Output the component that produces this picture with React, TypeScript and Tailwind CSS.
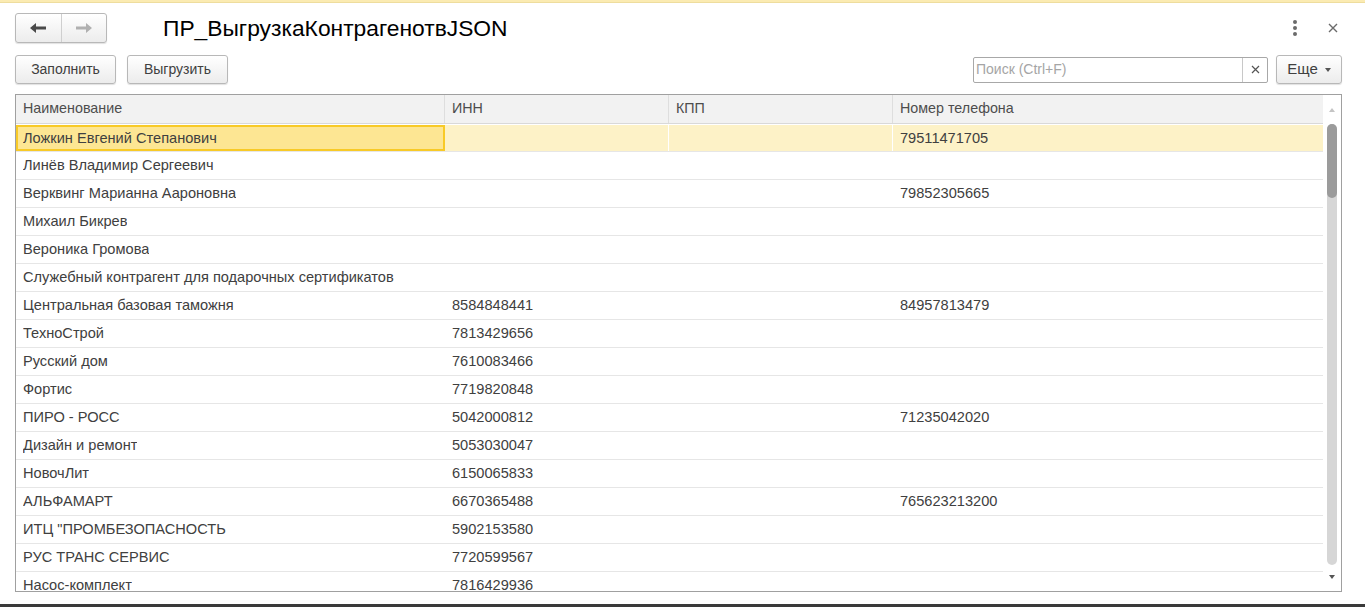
import React from "react";

const rows: [string, string, string, string][] = [
  ["Ложкин Евгений Степанович", "", "", "79511471705"],
  ["Линёв Владимир Сергеевич", "", "", ""],
  ["Верквинг Марианна Аароновна", "", "", "79852305665"],
  ["Михаил Бикрев", "", "", ""],
  ["Вероника Громова", "", "", ""],
  ["Служебный контрагент для подарочных сертификатов", "", "", ""],
  ["Центральная базовая таможня", "8584848441", "", "84957813479"],
  ["ТехноСтрой", "7813429656", "", ""],
  ["Русский дом", "7610083466", "", ""],
  ["Фортис", "7719820848", "", ""],
  ["ПИРО - РОСС", "5042000812", "", "71235042020"],
  ["Дизайн и ремонт", "5053030047", "", ""],
  ["НовочЛит", "6150065833", "", ""],
  ["АЛЬФАМАРТ", "6670365488", "", "765623213200"],
  ["ИТЦ \"ПРОМБЕЗОПАСНОСТЬ", "5902153580", "", ""],
  ["РУС ТРАНС СЕРВИС", "7720599567", "", ""],
  ["Насос-комплект", "7816429936", "", ""],
];

const btn =
  "h-[29px] rounded-[3px] border border-[#b8b8b8] bg-gradient-to-b from-white to-[#ececec] shadow-[0_1px_1px_rgba(0,0,0,0.12)] text-[14px] text-[#404040]";

function Arrow({ dir, color }: { dir: "left" | "right"; color: string }) {
  return (
    <svg width="18" height="12" viewBox="0 0 18 12">
      <g transform={dir === "right" ? "translate(18,0) scale(-1,1)" : undefined}>
        <path d="M1 6 L7 1 L7 4.5 L17 4.5 L17 7.5 L7 7.5 L7 11 Z" fill={color} />
      </g>
    </svg>
  );
}

export default function App() {
  return (
    <div
      className="h-[607px] w-[1365px] bg-white flex flex-col overflow-hidden"
      style={{ fontFamily: '"Liberation Sans", Arial, sans-serif' }}
    >
      <div className="h-[3px] bg-[#fbebb2] border-b border-[#eedd9e]" />

      <div className="flex-1 flex flex-col px-[15px] pr-[23px] pt-[10px] min-h-0">
        {/* title row */}
        <div className="flex items-center h-[30px]">
          <div className="flex h-[30px] w-[92px] rounded-[3px] border border-[#b8b8b8] bg-gradient-to-b from-white to-[#ececec] shadow-[0_1px_1px_rgba(0,0,0,0.12)]">
            <div className="flex-1 flex items-center justify-center border-r border-[#cfcfcf]">
              <Arrow dir="left" color="#4a4a4a" />
            </div>
            <div className="flex-1 flex items-center justify-center">
              <Arrow dir="right" color="#b0b0b0" />
            </div>
          </div>
          <h1 className="ml-[56px] text-[22.8px] text-black font-normal leading-none">
            ПР_ВыгрузкаКонтрагенотвJSON
          </h1>
          <div className="ml-auto flex items-center gap-[31px] pr-[4px]">
            <div className="flex flex-col gap-[2px]">
              <span className="w-[4px] h-[4px] rounded-full bg-[#6b6b6b]" />
              <span className="w-[4px] h-[4px] rounded-full bg-[#6b6b6b]" />
              <span className="w-[4px] h-[4px] rounded-full bg-[#6b6b6b]" />
            </div>
            <svg width="10" height="10" viewBox="0 0 10 10">
              <path d="M1 1 L9 9 M9 1 L1 9" stroke="#6b6b6b" strokeWidth="1.4" />
            </svg>
          </div>
        </div>

        {/* command bar */}
        <div className="flex items-center mt-[12px] h-[29px]">
          <button className={`${btn} w-[101px]`}>Заполнить</button>
          <button className={`${btn} w-[101px] ml-[11px]`}>Выгрузить</button>
          <div className="ml-auto flex h-[26px] w-[295px] border border-[#a8a8a8] rounded-[2px] bg-white">
            <span className="flex-1 flex items-center pl-[2px] text-[14px] text-[#a5a5a5]">
              Поиск (Ctrl+F)
            </span>
            <span className="w-[25px] flex items-center justify-center border-l border-[#c8c8c8]">
              <svg width="9" height="9" viewBox="0 0 9 9">
                <path d="M1 1 L8 8 M8 1 L1 8" stroke="#555" strokeWidth="1.2" />
              </svg>
            </span>
          </div>
          <button className={`${btn} w-[66px] ml-[8px] flex items-center justify-center gap-[7px] text-[15px]`}>
            Еще
            <svg width="6" height="4" viewBox="0 0 6 4">
              <path d="M0 0 L6 0 L3 4 Z" fill="#555" />
            </svg>
          </button>
        </div>

        {/* table */}
        <div className="mt-[10px] h-[500px] border border-[#a0a0a0] flex overflow-hidden">
          <div className="flex-1 flex flex-col min-w-0">
            <div className="flex h-[29px] bg-[#f2f2f2] border-b border-[#d9d9d9] text-[14.3px] text-[#4d4d4d] shrink-0">
              <div className="w-[429px] pl-[7px] flex items-center border-r border-[#dedede]">Наименование</div>
              <div className="w-[224px] pl-[7px] flex items-center border-r border-[#dedede]">ИНН</div>
              <div className="w-[224px] pl-[7px] flex items-center border-r border-[#dedede]">КПП</div>
              <div className="flex-1 pl-[7px] flex items-center">Номер телефона</div>
            </div>
            {rows.map((r, i) => {
              const sel = i === 0;
              return (
                <div
                  key={i}
                  className={`flex h-[28px] shrink-0 border-b border-[#e6e6e6] text-[14.6px] text-[#404040] ${
                    sel ? "bg-[#fdf2c7] border-t border-t-white" : ""
                  }`}
                >
                  <div
                    className={`w-[429px] flex items-center pt-px ${
                      sel ? "pl-[5px] border-2 border-[#f8ca27] bg-[#fde693]" : "pl-[7px]"
                    }`}
                  >
                    <span className="truncate">{r[0]}</span>
                  </div>
                  <div className={`w-[224px] pl-[7px] pt-px flex items-center ${sel ? "border-r border-white" : ""}`}>{r[1]}</div>
                  <div className={`w-[224px] pl-[7px] pt-px flex items-center ${sel ? "border-r border-white" : ""}`}>{r[2]}</div>
                  <div className="flex-1 pl-[7px] pt-px flex items-center">{r[3]}</div>
                </div>
              );
            })}
          </div>
          {/* scrollbar */}
          <div className="w-[18px] flex flex-col items-center shrink-0">
            <div className="h-[29px] flex items-center justify-center">
              <svg width="6" height="4" viewBox="0 0 6 4">
                <path d="M0 4 L6 4 L3 0 Z" fill="#c4c4c4" />
              </svg>
            </div>
            <div className="w-[10px] h-[441px] rounded-full bg-[#d6d6d6] flex flex-col">
              <div className="h-[74px] rounded-full bg-[#9b9b9b]" />
            </div>
            <div className="h-[24px] flex items-center justify-center">
              <svg width="6" height="4" viewBox="0 0 6 4">
                <path d="M0 0 L6 0 L3 4 Z" fill="#555" />
              </svg>
            </div>
          </div>
        </div>
      </div>

      <div className="h-[3px] bg-[#3a3a3a] mt-[12px]" />
    </div>
  );
}
